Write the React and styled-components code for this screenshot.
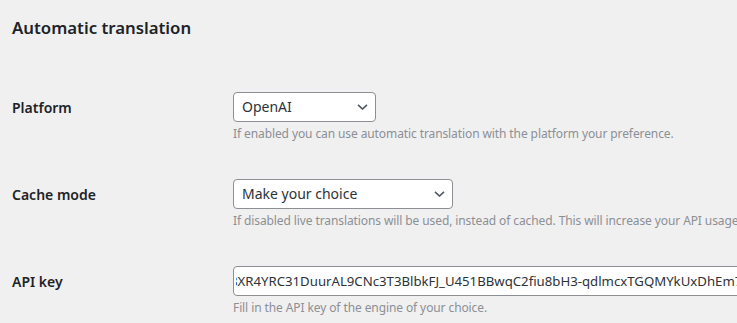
import React from "react";
import styled, { createGlobalStyle } from "styled-components";

const Global = createGlobalStyle`
  html, body { margin: 0; padding: 0; background: #f0f0f1; overflow: hidden; }
  body { font-family: "Noto Sans", "Open Sans", sans-serif; color: #3c434a; }
  * { box-sizing: border-box; }
`;

const Page = styled.div`
  width: 1000px;
  padding: 17px 0 0 12px;
`;

const Title = styled.h2`
  margin: 0 0 38px;
  font-size: 16.8px;
  line-height: 1.3;
  font-weight: 600;
  color: #1d2327;
`;

const Table = styled.div`
  display: flex;
  flex-direction: column;
`;

const Row = styled.div`
  display: grid;
  grid-template-columns: 221px 1fr;
  padding: 15px 0 21px;
`;

const Label = styled.label`
  padding-top: 7px;
  font-size: 14px;
  line-height: 18px;
  font-weight: 600;
  color: #1d2327;
`;

const Field = styled.div`
  display: flex;
  flex-direction: column;
  align-items: flex-start;
`;

const SelectWrap = styled.div`
  position: relative;
  width: ${(p) => p.$w}px;
`;

const Select = styled.select`
  appearance: none;
  width: 100%;
  height: 30px;
  padding: 0 24px 0 8px;
  font-family: inherit;
  font-size: 14px;
  color: #2c3338;
  background: #fff;
  border: 1px solid #8c8f94;
  border-radius: 4px;
  outline: none;
`;

const Chevron = styled.svg`
  position: absolute;
  right: 8px;
  top: 12px;
  width: 11px;
  height: 6px;
  pointer-events: none;
`;

const TextInput = styled.input`
  width: 560px;
  height: 30px;
  padding: 0 8px 0 2px;
  text-indent: -6px;
  font-family: inherit;
  font-size: 13.2px;
  color: #2c3338;
  background: #fff;
  border: 1px solid #8c8f94;
  border-radius: 4px;
  outline: none;
`;

const Description = styled.p`
  margin: 3px 0 0;
  font-size: 12px;
  letter-spacing: -0.1px;
  line-height: 18px;
  color: #8c8f94;
  white-space: nowrap;
`;

function Dropdown({ width, value, options }) {
  return (
    <SelectWrap $w={width}>
      <Select defaultValue={value}>
        {options.map((o) => (
          <option key={o}>{o}</option>
        ))}
      </Select>
      <Chevron viewBox="0 0 11 6">
        <path d="M1 0.8 L5.5 5 L10 0.8" fill="none" stroke="#50575e" strokeWidth="1.6" />
      </Chevron>
    </SelectWrap>
  );
}

export default function App() {
  return (
    <>
      <Global />
      <Page>
        <Title>Automatic translation</Title>
        <Table>
          <Row>
            <Label>Platform</Label>
            <Field>
              <Dropdown width={143} value="OpenAI" options={["OpenAI", "DeepL", "Google"]} />
              <Description>If enabled you can use automatic translation with the platform your preference.</Description>
            </Field>
          </Row>
          <Row>
            <Label>Cache mode</Label>
            <Field>
              <Dropdown width={220} value="Make your choice" options={["Make your choice", "Enabled", "Disabled"]} />
              <Description>If disabled live translations will be used, instead of cached. This will increase your API usage.</Description>
            </Field>
          </Row>
          <Row>
            <Label>API key</Label>
            <Field>
              <TextInput
                type="text"
                readOnly
                value="8XR4YRC31DuurAL9CNc3T3BlbkFJ_U451BBwqC2fiu8bH3-qdlmcxTGQMYkUxDhEm7pQ2"
              />
              <Description>Fill in the API key of the engine of your choice.</Description>
            </Field>
          </Row>
        </Table>
      </Page>
    </>
  );
}
